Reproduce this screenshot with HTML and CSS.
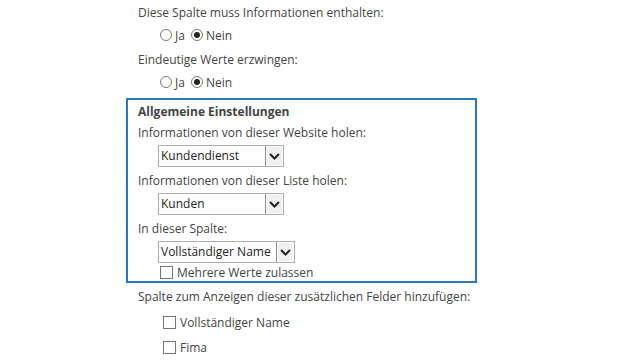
FILE: index.html
```html
<!DOCTYPE html>
<html>
<head>
    <title>Spalteneinstellungen</title>
    <link rel="stylesheet" href="styles.css">
</head>
<body>
    <div class="page">
        <div class="field">
            <div class="label">Diese Spalte muss Informationen enthalten:</div>
            <div class="radios">
                <span class="radio"></span><span class="opt">Ja</span>
                <span class="radio checked"></span><span class="opt">Nein</span>
            </div>
        </div>
        <div class="field">
            <div class="label">Eindeutige Werte erzwingen:</div>
            <div class="radios">
                <span class="radio"></span><span class="opt">Ja</span>
                <span class="radio checked"></span><span class="opt">Nein</span>
            </div>
        </div>

        <div class="group">
            <div class="group-title">Allgemeine Einstellungen</div>

            <div class="label">Informationen von dieser Website holen:</div>
            <div class="select fixed">
                <span class="select-text">Kundendienst</span>
                <span class="select-btn"><svg width="11" height="7" viewBox="0 0 11 7"><path d="M1 1 L5.5 5.5 L10 1" fill="none" stroke="#222" stroke-width="2"/></svg></span>
            </div>

            <div class="label">Informationen von dieser Liste holen:</div>
            <div class="select fixed">
                <span class="select-text">Kunden</span>
                <span class="select-btn"><svg width="11" height="7" viewBox="0 0 11 7"><path d="M1 1 L5.5 5.5 L10 1" fill="none" stroke="#222" stroke-width="2"/></svg></span>
            </div>

            <div class="label">In dieser Spalte:</div>
            <div class="select">
                <span class="select-text">Vollständiger Name</span>
                <span class="select-btn"><svg width="11" height="7" viewBox="0 0 11 7"><path d="M1 1 L5.5 5.5 L10 1" fill="none" stroke="#222" stroke-width="2"/></svg></span>
            </div>
            <div class="check-row inner">
                <span class="checkbox"></span><span>Mehrere Werte zulassen</span>
            </div>
        </div>

        <div class="field">
            <div class="label">Spalte zum Anzeigen dieser zusätzlichen Felder hinzufügen:</div>
            <div class="check-row extra">
                <span class="checkbox"></span><span>Vollständiger Name</span>
            </div>
            <div class="check-row extra">
                <span class="checkbox"></span><span>Fima</span>
            </div>
        </div>
    </div>
</body>
</html>
```

FILE: styles.css
```css
body {
    margin: 0;
    font-family: "Open Sans", "Noto Sans", sans-serif;
    font-size: 12px;
    color: #444;
    background-color: #fff;
}

.page {
    padding: 4px 0 0 138px;
}

.label {
    line-height: 18px;
    height: 18px;
}

.radios {
    display: flex;
    align-items: center;
    height: 22px;
    margin: 2px 0 5px 22px;
}

.radio {
    width: 12px;
    height: 12px;
    border: 1px solid #777;
    border-radius: 50%;
    box-sizing: border-box;
    position: relative;
    margin-right: 3px;
}

.radio.checked::after {
    content: "";
    position: absolute;
    left: 2px;
    top: 2px;
    width: 6px;
    height: 6px;
    border-radius: 50%;
    background-color: #222;
}

.opt {
    margin-right: 6px;
}

.group {
    margin: 0 0 0 -12px;
    width: 351px;
    height: 185px;
    box-sizing: border-box;
    border: 2px solid #2a78bd;
    padding: 2px 0 0 10px;
}

.group-title {
    font-weight: bold;
    line-height: 19px;
    margin-bottom: 3px;
}

.group .label {
    margin-bottom: 3px;
}

.select {
    display: inline-flex;
    height: 22px;
    margin: 0 0 5px 20px;
    border: 1px solid #abadb3;
    box-sizing: border-box;
    vertical-align: top;
}

.select.fixed {
    width: 126px;
}

.select-text {
    flex: 1;
    line-height: 20px;
    padding: 0 5px 0 2px;
    color: #222;
    white-space: nowrap;
}

.select-btn {
    width: 17px;
    display: flex;
    align-items: center;
    justify-content: center;
    background-color: #f0f0f0;
    border-left: 1px solid #8a8a8a;
    box-shadow: inset 0 0 0 1px #fff;
}

.check-row {
    display: flex;
    align-items: center;
    line-height: 17px;
}

.check-row.inner {
    margin: -4px 0 0 22px;
}

.check-row.extra {
    margin: 8px 0 0 25px;
}

.checkbox {
    width: 13px;
    height: 13px;
    border: 1px solid #777;
    box-sizing: border-box;
    margin-right: 4px;
}

.page > .field:last-child {
    margin-top: 5px;
}
```
